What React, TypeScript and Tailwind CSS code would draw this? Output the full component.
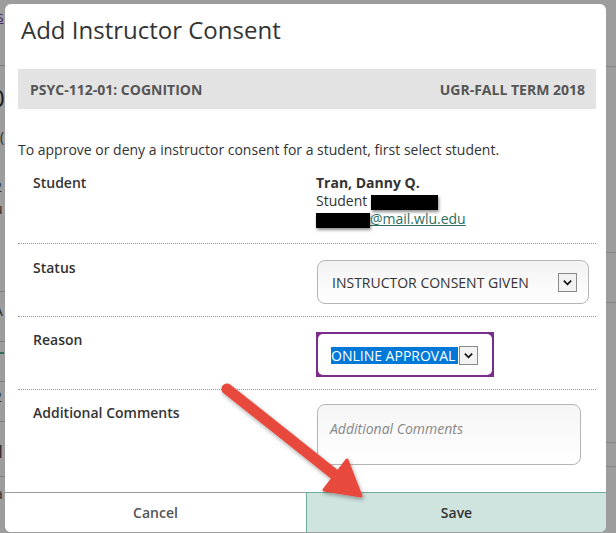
import React from 'react';

const font = { fontFamily: '"Open Sans", "Noto Sans", Arial, sans-serif' };

const Chevron = () => (
  <svg viewBox="0 0 12 12" className="w-[11px] h-[11px]">
    <path d="M2 4 L6 8 L10 4" fill="none" stroke="#111" strokeWidth="1.8" />
  </svg>
);

const DropSquare = () => (
  <div className="w-[19px] h-[19px] border border-[#8a8a8a] bg-[#f2f2f2] flex items-center justify-center">
    <Chevron />
  </div>
);

const Redacted = ({ w }: { w: number }) => (
  <span className="inline-block h-[15px] bg-black align-middle shadow-[1px_2px_3px_rgba(0,0,0,0.45)]" style={{ width: w }} />
);

const Arrow = () => (
  <svg className="absolute left-0 top-0 pointer-events-none" width="616" height="533">
    <defs>
      <filter id="sh" x="-20%" y="-20%" width="140%" height="140%">
        <feDropShadow dx="1" dy="2" stdDeviation="2" floodColor="#000" floodOpacity="0.35" />
      </filter>
    </defs>
    <g filter="url(#sh)">
      <line x1="227" y1="389" x2="334" y2="474" stroke="#e8483e" strokeWidth="11" strokeLinecap="round" />
      <polygon points="361,496 324,490 347,460" fill="#e8483e" stroke="#e8483e" strokeWidth="3" strokeLinejoin="round" />
    </g>
  </svg>
);

const LeftBackdrop = () => (
  <div className="w-[5px] shrink-0 flex flex-col overflow-hidden text-[#2a2a2a] text-[14px] leading-none">
    <div className="h-[66px] border-b border-[#7d7d7d] pt-[10px] -ml-[3px] text-[#4a2c6b] underline">s</div>
    <div className="h-[64px] pt-[20px] -ml-[9px] text-[24px] text-[#1a1a1a]">0</div>
    <div className="h-[50px] -ml-[8px]">2(</div>
    <div className="h-[22px] -ml-[6px]">2</div>
    <div className="h-[56px] -ml-[6px]">u</div>
    <div className="h-[34px] border-b border-[#7d7d7d] -ml-[5px]">(</div>
    <div className="h-[50px] border-b border-[#7d7d7d] pt-[12px] -ml-[6px]">A</div>
    <div className="h-[40px] border-b border-[#7d7d7d] pt-[10px]"><div className="w-[4px] h-[2px] bg-[#2f6b5d]" /></div>
    <div className="h-[40px] border-b border-[#7d7d7d] pt-[8px] -ml-[6px]">2</div>
    <div className="h-[55px] border-b border-[#7d7d7d] pt-[20px] -ml-[5px] text-[18px]">1</div>
    <div className="h-[40px] pt-[10px] -ml-[5px]">a</div>
  </div>
);

const RightBackdrop = () => (
  <div className="w-[10px] shrink-0 flex flex-col">
    <div className="h-[67px] border-b border-[#858585]" />
    <div className="h-[186px] border-b border-[#858585]" />
    <div className="h-[50px] border-b border-[#858585]" />
    <div className="h-[140px] border-b border-[#858585]" />
    <div className="h-[24px] border-b border-[#858585]" />
  </div>
);

export default function App() {
  return (
    <div className="relative w-[616px] h-[533px] overflow-hidden bg-[#9d9d9d] flex" style={font}>
      <LeftBackdrop />
      <div className="w-[601px] shrink-0 pt-[4px]">
        <div className="h-[528px] bg-white rounded-[6px] flex flex-col overflow-hidden">
          <div className="flex-1 pl-[13px] pr-[10px] pt-[10px]">
            <h1 className="pl-[3px] text-[24px] leading-[32px] text-[#333] font-normal">Add Instructor Consent</h1>

            <div className="mt-[23px] h-[40px] bg-[#e3e3e3] flex items-center justify-between pl-[12px] pr-[11px] text-[14px] font-bold text-[#555] uppercase">
              <span>PSYC-112-01: COGNITION</span>
              <span>UGR-FALL TERM 2018</span>
            </div>

            <p className="mt-[31px] text-[14px] leading-[20px] text-[#333]">
              To approve or deny a instructor consent for a student, first select student.
            </p>

            <div className="mt-[10px] grid grid-cols-[298px_1fr] pt-[4px] pb-[15px] border-b border-dotted border-[#999]">
              <div className="pl-[15px] text-[14px] leading-[18px] font-semibold text-[#333]">Student</div>
              <div className="text-[14px] leading-[18px] text-[#333]">
                <div className="font-bold">Tran, Danny Q.</div>
                <div>Student <Redacted w={67} /></div>
                <div><Redacted w={54} /><a className="text-[#2d6e60] underline">@mail.wlu.edu</a></div>
              </div>
            </div>

            <div className="grid grid-cols-[298px_1fr] pt-[15px] pb-[12px] border-b border-dotted border-[#999]">
              <div className="pl-[15px] text-[14px] leading-[18px] font-semibold text-[#333]">Status</div>
              <div className="pt-[1px] pl-[1px]">
                <div className="w-[272px] h-[44px] border border-[#b5b5b5] rounded-[8px] bg-gradient-to-b from-[#f3f3f3] to-white flex items-center justify-between pl-[14px] pr-[11px]">
                  <span className="text-[14px] text-[#333] uppercase">INSTRUCTOR CONSENT GIVEN</span>
                  <DropSquare />
                </div>
              </div>
            </div>

            <div className="grid grid-cols-[298px_1fr] pt-[14px] pb-[12px] border-b border-dotted border-[#999]">
              <div className="pl-[15px] text-[14px] leading-[18px] font-semibold text-[#333]">Reason</div>
              <div className="pt-[1px]">
                <div className="w-[178px] h-[45px] border-2 border-[#7b2d8b] bg-[#7b2d8b]">
                  <div className="w-full h-full bg-white rounded-[5px] flex items-center pl-[13px] pt-[1px]">
                    <span className="bg-[#0078d7] text-white text-[14px] leading-[17px] pr-[3px] uppercase">ONLINE APPROVAL</span>
                    <span className="ml-[1px]"><DropSquare /></span>
                  </div>
                </div>
              </div>
            </div>

            <div className="grid grid-cols-[298px_1fr] pt-[14px]">
              <div className="pl-[15px] text-[14px] leading-[18px] font-semibold text-[#333]">Additional Comments</div>
              <div className="pl-[1px]">
                <div className="w-[264px] h-[61px] border border-[#b5b5b5] rounded-[8px] bg-gradient-to-b from-[#f5f5f5] to-white px-[12px] pt-[11px]">
                  <span className="text-[14px] italic text-[#888]">Additional Comments</span>
                </div>
              </div>
            </div>
          </div>

          <div className="h-[40px] flex border-t border-[#9a9a9a]">
            <button className="w-[301px] bg-white text-[14px] font-semibold text-[#555]">Cancel</button>
            <button className="flex-1 bg-[#cfe3df] border-l border-t border-[#6fae9f] -mt-[1px] text-[14px] font-semibold text-[#333]">Save</button>
          </div>
        </div>
      </div>
      <RightBackdrop />
      <Arrow />
    </div>
  );
}
